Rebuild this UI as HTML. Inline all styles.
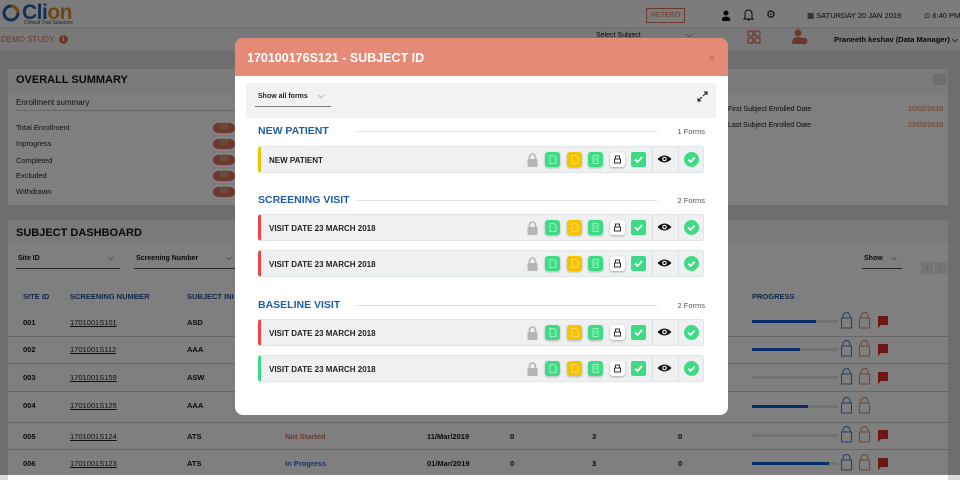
<!DOCTYPE html>
<html><head><meta charset="utf-8"><style>
*{box-sizing:border-box;margin:0;padding:0}
body{width:960px;height:475px;overflow:hidden;background:#dcdcdc;font-family:"Liberation Sans",Arial,sans-serif;position:relative;color:#111}
.a{position:absolute;white-space:nowrap}
.b{font-weight:bold}
.pill{position:absolute;left:213px;width:22px;height:10px;border-radius:5px;background:#d9735a;color:#f7c9bc;font-size:7px;text-align:center;line-height:10px}
.lbl{position:absolute;left:16px;font-size:7.5px;color:#222}
.th{font-size:7.5px;font-weight:bold;color:#1f4f96}
.td{font-size:7.5px;font-weight:bold;color:#111}
.hr{position:absolute;left:8px;width:940px;height:1px;background:#cfcfcf}
.ov{position:absolute;left:0;top:0;width:960px;height:475px;background:rgba(0,0,0,.5)}
.modal{position:absolute;left:235px;top:38px;width:493px;height:377px;background:#fff;border-radius:8px;overflow:hidden}
.mh{height:38px;background:#e48a77;color:#fff;font-weight:bold;font-size:12.5px;padding:13px 0 0 12px}
.sec{position:absolute;left:23px;font-size:10.5px;font-weight:bold;color:#1f5ea8}
.secl{position:absolute;left:122px;width:300px;height:1px;background:#ddd}
.fc{position:absolute;right:23px;font-size:7.5px;color:#555}
.row{position:absolute;left:23px;width:446px;height:27px;background:#eef0f1;border-radius:3px;border:1px solid #e2e5e6;border-left:3px solid #f5c000}
.row .t{position:absolute;left:8px;top:9px;font-size:8px;font-weight:bold;color:#222}
.ic{position:absolute;top:5px;width:15px;height:15px;border-radius:3px}
.g{background:#3ddc84;box-shadow:0 1px 2px rgba(0,0,0,.25)}
.y{background:#f7c200;box-shadow:0 1px 2px rgba(0,0,0,.25)}
.w{background:#fff;box-shadow:0 1px 2px rgba(0,0,0,.3)}
.dv{position:absolute;top:0;width:1px;height:25px;background:#dcdfe0}
</style></head><body>
<!-- top header -->
<div class="a" style="left:0;top:0;width:960px;height:28px;background:#f8f8f8;border-bottom:1px solid #e6e6e6"></div>
<svg class="a" style="left:1px;top:3px" width="20" height="20"><circle cx="10" cy="10" r="7" fill="none" stroke="#2b5aa6" stroke-width="3"/><path d="M10 3 A7 7 0 0 1 17 10" stroke="#e08a2c" stroke-width="3" fill="none"/></svg>
<div class="a b" style="left:22px;top:1px;font-size:21px;color:#2b5aa6;letter-spacing:-.5px">Cli<span style="color:#e08a2c">on</span></div>
<div class="a" style="left:24px;top:20px;font-size:5px;color:#444">Clinical Trial Solutions</div>
<div class="a" style="left:646px;top:8px;width:39px;height:15px;border:1px solid #d9735a;color:#d9735a;font-size:7px;text-align:center;line-height:13px">HETERO</div>
<svg class="a" style="left:721px;top:10px" width="10" height="11"><circle cx="5" cy="3" r="2.5" fill="#111"/><path d="M1 11 V8 Q5 5 9 8 V11Z" fill="#111"/></svg>
<svg class="a" style="left:743px;top:9px" width="11" height="12"><path d="M2 9 L2 5 Q2 1 5.5 1 Q9 1 9 5 L9 9 L10 10 L1 10Z M4.5 11 h2" fill="none" stroke="#111" stroke-width="1"/></svg>
<div class="a" style="left:766px;top:8px;font-size:11px;color:#111">⚙</div>
<div class="a" style="left:807px;top:11px;font-size:7.5px;color:#111">▦ SATURDAY 20 JAN 2019</div>
<div class="a" style="left:924px;top:11px;font-size:7.5px;color:#111">⊙ 6:40 PM</div>
<!-- second bar -->
<div class="a" style="left:0;top:29px;width:960px;height:22px;background:#f2f2f2"></div>
<div class="a" style="left:1px;top:35px;font-size:8px;color:#d9735a">DEMO STUDY</div>
<div class="a" style="left:59px;top:35px;width:9px;height:9px;border-radius:50%;background:#d9735a;color:#fff;font-size:7px;text-align:center;line-height:9px;font-weight:bold">i</div>
<div class="a" style="left:596px;top:32px;font-size:7px;color:#111">Select Subject</div>
<div class="a" style="left:686px;top:30px;font-size:8px;color:#333">⌵</div>
<svg class="a" style="left:747px;top:30px" width="14" height="14" fill="none" stroke="#d9735a" stroke-width="1.3"><rect x="1" y="1" width="5" height="5" rx="1"/><rect x="8" y="1" width="5" height="5" rx="1"/><rect x="1" y="8" width="5" height="5" rx="1"/><rect x="8" y="8" width="5" height="5" rx="1"/></svg>
<svg class="a" style="left:792px;top:29px" width="16" height="16" fill="#d9735a"><circle cx="6" cy="4" r="3.5"/><path d="M0 15 Q0 8 6 8 Q12 8 12 15Z"/><circle cx="12" cy="12" r="3.5"/></svg>
<div class="a b" style="left:834px;top:35px;font-size:7.5px;color:#111">Praneeth keshav (Data Manager) ⌵</div>
<!-- overall summary panel -->
<div class="a" style="left:8px;top:69px;width:940px;height:136px;background:#fff"></div>
<div class="a" style="left:8px;top:69px;width:940px;height:24px;background:#f4f4f4"></div>
<div class="a b" style="left:16px;top:74px;font-size:11px;color:#111">OVERALL SUMMARY</div>
<div class="a" style="left:933px;top:74px;width:13px;height:11px;background:#ddd"></div>
<div class="a" style="left:16px;top:98px;font-size:8px;color:#222">Enrollment summary</div>
<div class="a" style="left:16px;top:110px;width:220px;height:1px;background:#ccc"></div>
<div class="lbl" style="top:123px">Total Enrollment</div><div class="pill" style="top:123px">59</div>
<div class="lbl" style="top:139px">Inprogress</div><div class="pill" style="top:139px">27</div>
<div class="lbl" style="top:156px">Completed</div><div class="pill" style="top:155px">66</div>
<div class="lbl" style="top:171px">Excluded</div><div class="pill" style="top:171px">66</div>
<div class="lbl" style="top:187px">Withdrawn</div><div class="pill" style="top:187px">66</div>
<div class="a" style="left:728px;top:106px;font-size:7px;color:#111">First Subject Enrolled Date</div>
<div class="a" style="left:908px;top:106px;font-size:7px;color:#d9735a">10/02/2019</div>
<div class="a" style="left:728px;top:122px;font-size:7px;color:#111">Last Subject Enrolled Date</div>
<div class="a" style="left:908px;top:122px;font-size:7px;color:#d9735a">23/03/2019</div>
<!-- subject dashboard -->
<div class="a" style="left:8px;top:220px;width:940px;height:260px;background:#fff"></div>
<div class="a" style="left:8px;top:220px;width:940px;height:24px;background:#f4f4f4"></div>
<div class="a b" style="left:16px;top:227px;font-size:11px;color:#111">SUBJECT DASHBOARD</div>
<div class="a b" style="left:18px;top:255px;font-size:7px;color:#111">Site ID</div>
<div class="a" style="left:108px;top:253px;font-size:8px;color:#333">⌵</div>
<div class="a" style="left:16px;top:268px;width:104px;height:1px;background:#555"></div>
<div class="a b" style="left:136px;top:255px;font-size:7px;color:#111">Screening Number</div>
<div class="a" style="left:226px;top:253px;font-size:8px;color:#333">⌵</div>
<div class="a" style="left:134px;top:268px;width:102px;height:1px;background:#555"></div>
<div class="a b" style="left:864px;top:255px;font-size:7px;color:#111">Show</div>
<div class="a" style="left:891px;top:253px;font-size:8px;color:#333">⌵</div>
<div class="a" style="left:862px;top:268px;width:40px;height:1px;background:#555"></div>
<div class="a" style="left:921px;top:262px;width:12px;height:12px;background:#e8e8e8;color:#bbb;font-size:9px;text-align:center;line-height:12px">‹</div>
<div class="a" style="left:935px;top:262px;width:12px;height:12px;background:#e8e8e8;color:#bbb;font-size:9px;text-align:center;line-height:12px">›</div>
<div class="a th" style="left:23px;top:292px">SITE ID</div>
<div class="a th" style="left:70px;top:292px">SCREENING NUMBER</div>
<div class="a th" style="left:187px;top:292px">SUBJECT INI</div>
<div class="a th" style="left:752px;top:292px">PROGRESS</div>
<div class="a td" style="left:23px;top:318px">001</div><div class="a td" style="left:70px;top:318px;font-weight:normal;text-decoration:underline;color:#222">1701001S101</div><div class="a td" style="left:187px;top:318px">ASD</div>
<div class="hr" style="top:336px"></div>
<div class="a td" style="left:23px;top:345px">002</div><div class="a td" style="left:70px;top:345px;font-weight:normal;text-decoration:underline;color:#222">1701001S112</div><div class="a td" style="left:187px;top:345px">AAA</div>
<div class="hr" style="top:363px"></div>
<div class="a td" style="left:23px;top:373px">003</div><div class="a td" style="left:70px;top:373px;font-weight:normal;text-decoration:underline;color:#222">1701001S159</div><div class="a td" style="left:187px;top:373px">ASW</div>
<div class="hr" style="top:391px"></div>
<div class="a td" style="left:23px;top:401px">004</div><div class="a td" style="left:70px;top:401px;font-weight:normal;text-decoration:underline;color:#222">1701001S125</div><div class="a td" style="left:187px;top:401px">AAA</div>
<div class="hr" style="top:422px"></div>
<div class="a td" style="left:23px;top:432px">005</div><div class="a td" style="left:70px;top:432px;font-weight:normal;text-decoration:underline;color:#222">1701001S124</div><div class="a td" style="left:187px;top:432px">ATS</div>
<div class="a td" style="left:285px;top:432px;color:#d9735a">Not Started</div><div class="a td" style="left:427px;top:432px">11/Mar/2019</div><div class="a td" style="left:510px;top:432px">0</div><div class="a td" style="left:592px;top:432px">3</div><div class="a td" style="left:678px;top:432px">0</div>
<div class="hr" style="top:449px"></div>
<div class="a td" style="left:23px;top:459px">006</div><div class="a td" style="left:70px;top:459px;font-weight:normal;text-decoration:underline;color:#222">1701001S123</div><div class="a td" style="left:187px;top:459px">ATS</div>
<div class="a td" style="left:285px;top:459px;color:#2b6bd0">In Progress</div><div class="a td" style="left:427px;top:459px">01/Mar/2019</div><div class="a td" style="left:510px;top:459px">0</div><div class="a td" style="left:592px;top:459px">3</div><div class="a td" style="left:678px;top:459px">0</div>
<svg class="a" style="left:750px;top:312px" width="150" height="160">
<g fill="#e2e2e2"><rect x="2" y="8" width="86" height="3" rx="1"/><rect x="2" y="36" width="86" height="3" rx="1"/><rect x="2" y="64" width="86" height="3" rx="1"/><rect x="2" y="93" width="86" height="3" rx="1"/><rect x="2" y="122" width="86" height="3" rx="1"/><rect x="2" y="150" width="86" height="3" rx="1"/></g>
<g fill="#0a5ad0"><rect x="2" y="8" width="64" height="3"/><rect x="2" y="36" width="48" height="3"/><rect x="2" y="93" width="56" height="3"/><rect x="2" y="150" width="77" height="3"/></g>
<g fill="none" stroke-width="1">
<g stroke="#3a7fdb"><path d="M93 6 v-2 a3.5 3.5 0 0 1 7 0 v2 M91.5 6 h10 v10 h-10z"/><path d="M93 34 v-2 a3.5 3.5 0 0 1 7 0 v2 M91.5 34 h10 v10 h-10z"/><path d="M93 62 v-2 a3.5 3.5 0 0 1 7 0 v2 M91.5 62 h10 v10 h-10z"/><path d="M93 91 v-2 a3.5 3.5 0 0 1 7 0 v2 M91.5 91 h10 v10 h-10z"/><path d="M93 120 v-2 a3.5 3.5 0 0 1 7 0 v2 M91.5 120 h10 v10 h-10z"/><path d="M93 148 v-2 a3.5 3.5 0 0 1 7 0 v2 M91.5 148 h10 v10 h-10z"/></g>
<g stroke="#e58a70"><path d="M111 6 v-2 a3.5 3.5 0 0 1 7 0 v2 M109.5 6 h10 v10 h-10z"/><path d="M111 34 v-2 a3.5 3.5 0 0 1 7 0 v2 M109.5 34 h10 v10 h-10z"/><path d="M111 62 v-2 a3.5 3.5 0 0 1 7 0 v2 M109.5 62 h10 v10 h-10z"/><path d="M111 91 v-2 a3.5 3.5 0 0 1 7 0 v2 M109.5 91 h10 v10 h-10z"/><path d="M111 120 v-2 a3.5 3.5 0 0 1 7 0 v2 M109.5 120 h10 v10 h-10z"/><path d="M111 148 v-2 a3.5 3.5 0 0 1 7 0 v2 M109.5 148 h10 v10 h-10z"/></g></g>
<g fill="#e02a2a"><path d="M128 4 h10 v9 h-7 l-3 3z"/><path d="M128 32 h10 v9 h-7 l-3 3z"/><path d="M128 60 h10 v9 h-7 l-3 3z"/><path d="M128 118 h10 v9 h-7 l-3 3z"/><path d="M128 146 h10 v9 h-7 l-3 3z"/></g>
</svg>
<div class="ov"></div>
<div class="modal">
<div class="mh">170100176S121 - SUBJECT ID</div>
<div class="a" style="right:13px;top:13px;color:#d9604a;font-size:12px">×</div>
<div class="a" style="left:11px;top:45px;width:470px;height:35px;background:#f3f2f1"></div>
<div class="a b" style="left:23px;top:55px;font-size:7px;color:#222">Show all forms</div>
<div class="a" style="left:83px;top:53px;font-size:8px;color:#555">⌵</div>
<div class="a" style="left:20px;top:68px;width:76px;height:1px;background:#777"></div>
<svg class="a" style="left:462px;top:53px" width="11" height="11" stroke="#111" stroke-width="1" fill="none"><path d="M6 5 L10 1 M7 1 h3 v3 M5 6 L1 10 M1 7 v3 h3"/></svg>
<div class="sec" style="top:87px">NEW PATIENT</div><div class="secl" style="top:93px"></div><div class="fc" style="top:89px">1 Forms</div>
<div class="sec" style="top:156px">SCREENING VISIT</div><div class="secl" style="top:162px"></div><div class="fc" style="top:158px">2 Forms</div>
<div class="sec" style="top:261px">BASELINE VISIT</div><div class="secl" style="top:267px"></div><div class="fc" style="top:263px">2 Forms</div>
<div id="rows"></div>
</div>
<script>
var rs=[[108,'NEW PATIENT','#f5c000'],[176,'VISIT DATE 23 MARCH 2018','#ef4444'],[212,'VISIT DATE 23 MARCH 2018','#ef4444'],[281,'VISIT DATE 23 MARCH 2018','#ef4444'],[317,'VISIT DATE 23 MARCH 2018','#3ddc84']];
var h='';
rs.forEach(function(r){
h+='<div class="row" style="top:'+r[0]+'px;border-left-color:'+r[2]+'"><div class="t">'+r[1]+'</div>'+
'<svg class="a" style="left:266px;top:6px" width="11" height="14"><path d="M2.5 6 v-2 a3 3 0 0 1 6 0 v2" stroke="#b5b5b5" stroke-width="1.6" fill="none"/><rect x="0.5" y="6" width="10" height="8" rx="1" fill="#b5b5b5"/></svg>'+
'<div class="ic g" style="left:284px"><svg width="15" height="15"><path d="M5 3.5h4l2 2v6H5z" fill="none" stroke="#bff5d6" stroke-width=".8"/></svg></div>'+
'<div class="ic y" style="left:306px"><svg width="15" height="15"><path d="M5 3.5h4l2 2v6H5z" fill="none" stroke="#ffe38a" stroke-width=".8"/></svg></div>'+
'<div class="ic g" style="left:327px"><svg width="15" height="15"><path d="M5 3.5h5v8H5z M6.5 6h2 M6.5 8h2" fill="none" stroke="#bff5d6" stroke-width=".8"/></svg></div>'+
'<div class="ic w" style="left:349px"><svg width="15" height="15"><path d="M5.5 4h4v3h-4z M4.5 7h6v4h-6z" fill="none" stroke="#333" stroke-width="1"/></svg></div>'+
'<div class="ic" style="left:370px;background:#3ddc84;border-radius:2px"><svg width="15" height="15"><path d="M4 7.5l2.5 2.5 4.5-5" stroke="#fff" stroke-width="1.8" fill="none"/></svg></div>'+
'<div class="dv" style="left:391px"></div>'+
'<svg class="a" style="left:396px;top:7px" width="15" height="10"><path d="M0.5 5 Q7.5 -2 14.5 5 Q7.5 12 0.5 5z" fill="#111"/><circle cx="7.5" cy="5" r="2.3" fill="#fff"/><circle cx="7.5" cy="5" r="1.2" fill="#111"/></svg>'+
'<div class="dv" style="left:417px"></div>'+
'<svg class="a" style="left:423px;top:5px" width="15" height="15"><circle cx="7.5" cy="7.5" r="7.5" fill="#3ddc84"/><path d="M4.3 7.6l2.3 2.3 4-4.2" stroke="#fff" stroke-width="1.8" fill="none"/></svg>'+
'</div>';});
document.getElementById('rows').innerHTML=h;
</script>
</body></html>
